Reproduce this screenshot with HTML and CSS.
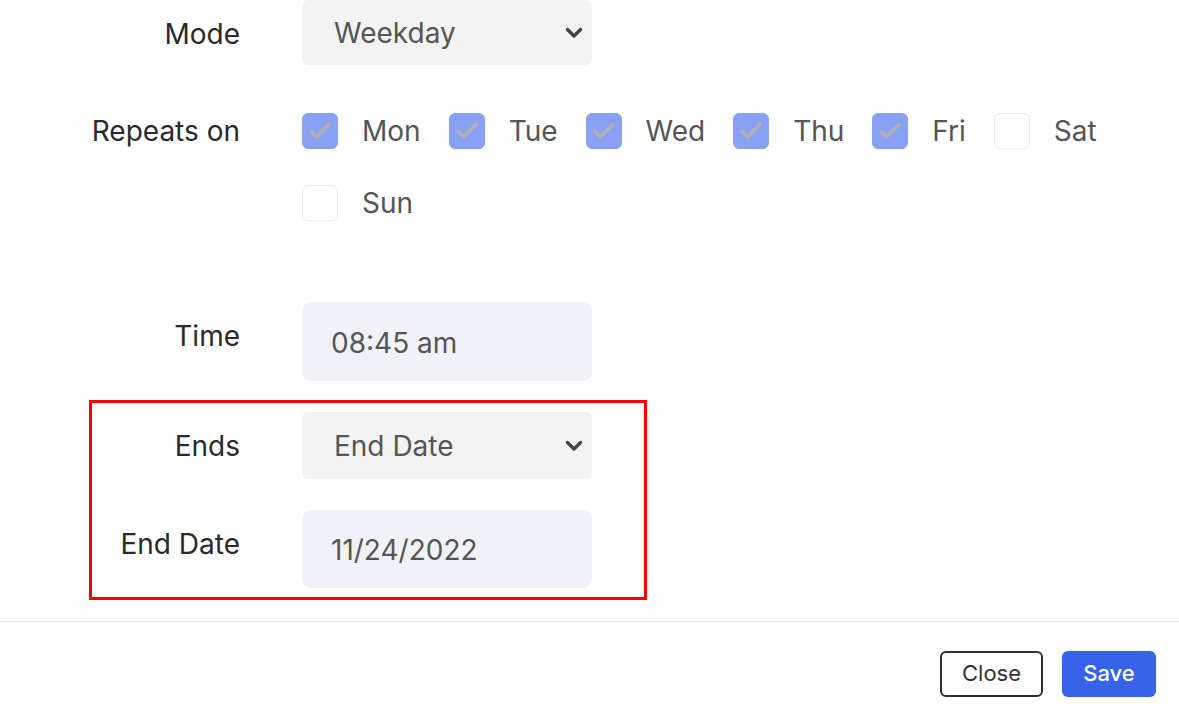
FILE: index.html
```html
<!DOCTYPE html>
<html lang="en">
<head>
<meta charset="utf-8">
<title>Schedule</title>
<link rel="stylesheet" href="styles.css">
</head>
<body>
<div class="form">
  <div class="row row-mode">
    <div class="label">Mode</div>
    <div class="select">
      <span>Weekday</span>
      <svg class="chev" width="18" height="12" viewBox="0 0 18 12"><path d="M2.5 2.5 L9 9 L15.5 2.5" fill="none" stroke="#444" stroke-width="3.4" stroke-linecap="round" stroke-linejoin="round"/></svg>
    </div>
  </div>

  <div class="row row-repeat">
    <div class="label label-repeat">Repeats on</div>
    <div class="days">
      <div class="day"><span class="box checked"><svg width="36" height="36" viewBox="0 0 36 36"><path d="M9 18.5 L14.5 24 L27 11.5" fill="none" stroke="#b0b0b0" stroke-width="3.6" stroke-linecap="round" stroke-linejoin="round"/></svg></span><span class="day-name">Mon</span></div>
      <div class="day"><span class="box checked"><svg width="36" height="36" viewBox="0 0 36 36"><path d="M9 18.5 L14.5 24 L27 11.5" fill="none" stroke="#b0b0b0" stroke-width="3.6" stroke-linecap="round" stroke-linejoin="round"/></svg></span><span class="day-name">Tue</span></div>
      <div class="day"><span class="box checked"><svg width="36" height="36" viewBox="0 0 36 36"><path d="M9 18.5 L14.5 24 L27 11.5" fill="none" stroke="#b0b0b0" stroke-width="3.6" stroke-linecap="round" stroke-linejoin="round"/></svg></span><span class="day-name">Wed</span></div>
      <div class="day"><span class="box checked"><svg width="36" height="36" viewBox="0 0 36 36"><path d="M9 18.5 L14.5 24 L27 11.5" fill="none" stroke="#b0b0b0" stroke-width="3.6" stroke-linecap="round" stroke-linejoin="round"/></svg></span><span class="day-name">Thu</span></div>
      <div class="day"><span class="box checked"><svg width="36" height="36" viewBox="0 0 36 36"><path d="M9 18.5 L14.5 24 L27 11.5" fill="none" stroke="#b0b0b0" stroke-width="3.6" stroke-linecap="round" stroke-linejoin="round"/></svg></span><span class="day-name">Fri</span></div>
      <div class="day"><span class="box"></span><span class="day-name">Sat</span></div>
      <div class="day"><span class="box"></span><span class="day-name">Sun</span></div>
    </div>
  </div>

  <div class="row row-time">
    <div class="label">Time</div>
    <div class="input input-time">08:45 am</div>
  </div>

  <div class="highlight">
    <div class="row">
      <div class="label label-inner">Ends</div>
      <div class="select select-ends">
        <span>End Date</span>
        <svg class="chev" width="18" height="12" viewBox="0 0 18 12"><path d="M2.5 2.5 L9 9 L15.5 2.5" fill="none" stroke="#444" stroke-width="3.4" stroke-linecap="round" stroke-linejoin="round"/></svg>
      </div>
    </div>
    <div class="row row-enddate">
      <div class="label label-inner">End Date</div>
      <div class="input input-date">11/24/2022</div>
    </div>
  </div>
</div>

<div class="footer">
  <button class="btn btn-close">Close</button>
  <button class="btn btn-save">Save</button>
</div>
</body>
</html>
```

FILE: styles.css
```css
* { box-sizing: border-box; }

html, body {
  margin: 0;
  padding: 0;
  background: #ffffff;
}

body {
  font-family: Inter, "Noto Sans", sans-serif;
  font-size: 28px;
  color: #333;
  width: 1179px;
  height: 715px;
  overflow: hidden;
}

.form {
  display: flex;
  flex-direction: column;
}

.row {
  display: flex;
  align-items: flex-start;
  gap: 62px;
}

.label {
  width: 240px;
  flex: none;
  text-align: right;
  line-height: 32px;
  padding-top: 18px;
  color: #2a2a2a;
  font-weight: 400;
}

.label-inner { width: 148px; }
.label-repeat { padding-top: 2px; }

.select {
  width: 290px;
  height: 65px;
  background: #f3f3f3;
  border-radius: 6px;
  display: flex;
  align-items: center;
  justify-content: space-between;
  padding: 0 9px 0 32px;
  color: #555;
}

.select-ends { height: 67px; }

.chev { margin-top: 1px; }

.row-repeat { margin-top: 48px; }

.days {
  flex: 1;
  display: flex;
  flex-wrap: wrap;
  row-gap: 36px;
  column-gap: 28px;
}

.day {
  display: flex;
  align-items: center;
  gap: 24px;
  height: 36px;
  color: #555;
}

.box {
  width: 36px;
  height: 36px;
  border-radius: 6px;
  border: 1.5px solid #e9e9f1;
  background: #fff;
  display: flex;
  align-items: center;
  justify-content: center;
  flex: none;
}

.box.checked {
  background: #89a1f2;
  border-color: #89a1f2;
}

.box svg { display: block; flex: none; }

.row-time { margin-top: 81px; }

.input {
  width: 290px;
  background: #f1f2f7;
  border-radius: 9px;
  display: flex;
  align-items: center;
  color: #555;
  padding-left: 29px;
  padding-top: 2px;
}

.input-time { height: 79px; }
.input-date { height: 78px; }

.highlight {
  margin-top: 19px;
  margin-left: 89px;
  width: 558px;
  border: 3px solid #ff0000;
  padding: 9px 0 9px 0;
  display: flex;
  flex-direction: column;
  gap: 31px;
}

.footer {
  margin-top: 21px;
  border-top: 1px solid #e8e8e8;
  display: flex;
  justify-content: flex-end;
  gap: 19px;
  padding: 29px 23px 0 0;
}

.btn {
  font-family: Inter, "Noto Sans", sans-serif;
  font-size: 22px;
  height: 46px;
  border-radius: 6px;
  padding: 0 0 3px 0;
  cursor: pointer;
}

.btn-close {
  width: 103px;
  background: #fff;
  border: 2px solid #2c3036;
  color: #333;
}

.btn-save {
  width: 94px;
  background: #3563e9;
  border: none;
  color: #fff;
  font-weight: 500;
}
```
